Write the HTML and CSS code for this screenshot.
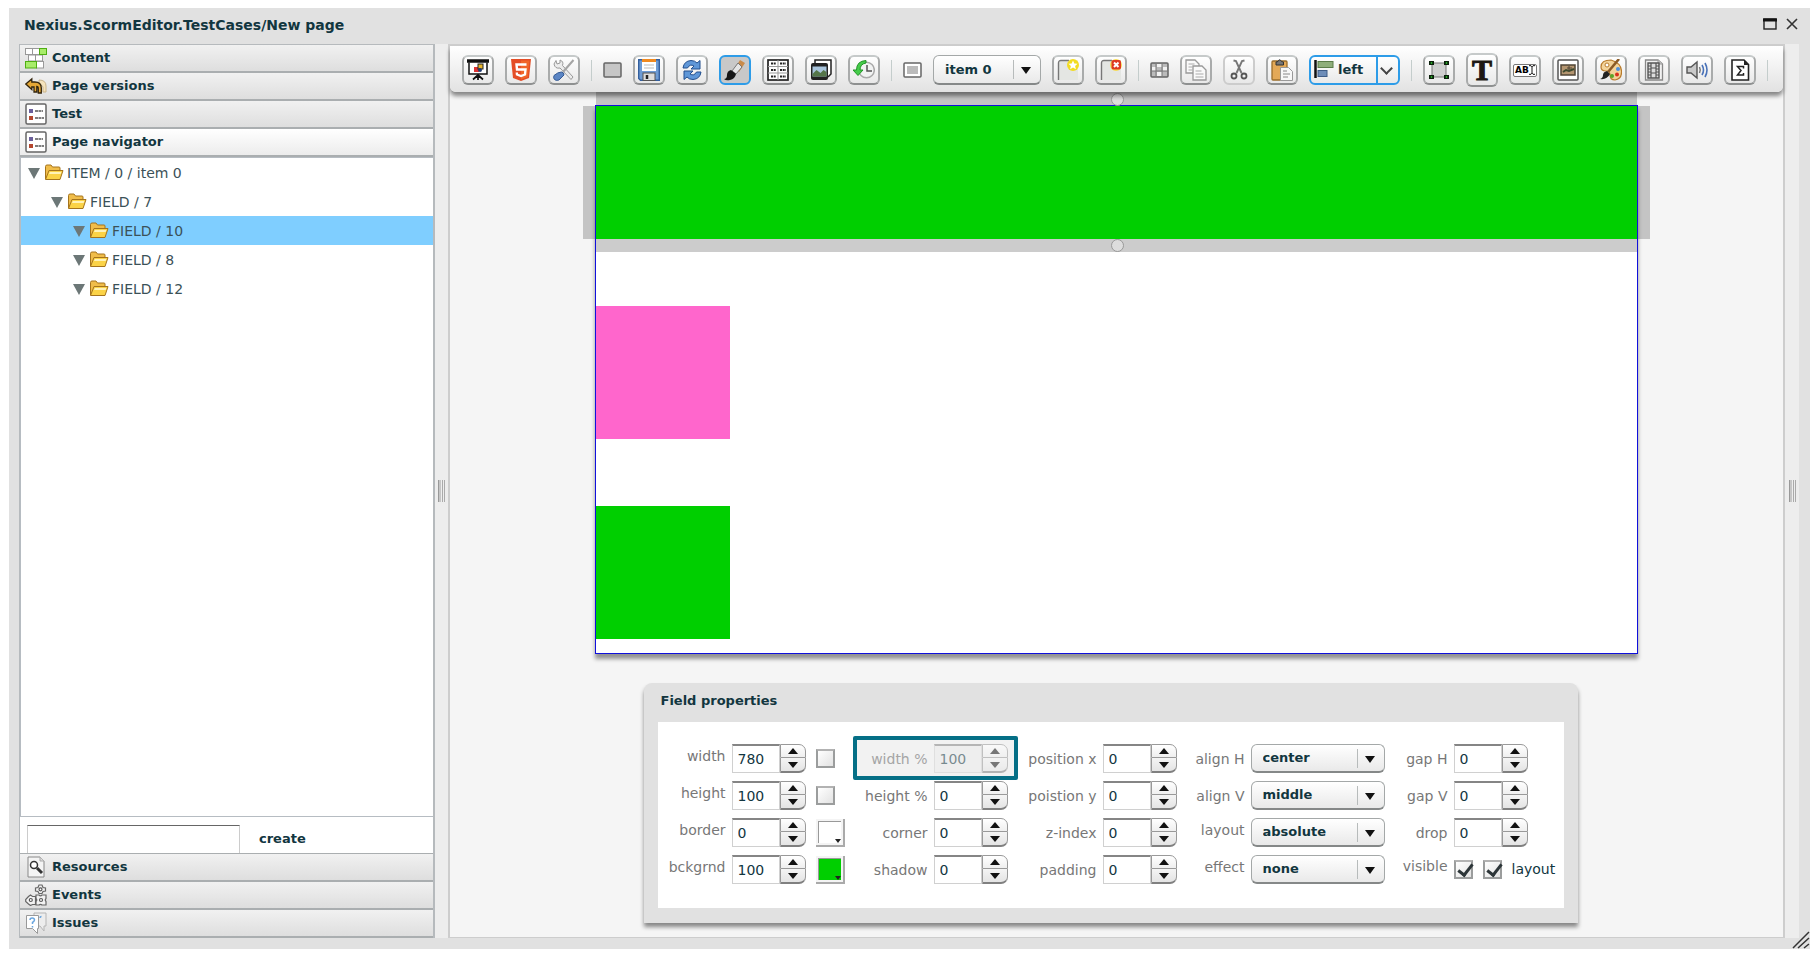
FILE: index.html
```html
<!DOCTYPE html>
<html lang="en">
<head>
<meta charset="utf-8">
<title>Nexius.ScormEditor.TestCases/New page</title>
<link rel="stylesheet" href="styles.css">
</head>
<body>
<svg class="defs" aria-hidden="true">
  <symbol id="folder" viewBox="0 0 20 17">
    <path d="M1.500 15V2.500q0-1.500 1.500-1.500h4l1.500 2H15q1 0 1 1v3" fill="#f0bd4a" stroke="#a5741c"/>
    <path d="M1.500 15.500 5 6.500h14L16 15.500z" fill="#fbd347" stroke="#a5741c"/>
    <path d="M5.800 8h11.500l-.6 2H5z" fill="#fff3b8"/>
  </symbol>
  <symbol id="list" viewBox="0 0 22 22">
    <rect x="1" y="1" width="20" height="20" rx="1.500" fill="#fff" stroke="#666" stroke-width="1.500"/>
    <rect x="4" y="6" width="4" height="4" fill="#6b5f9b"/><rect x="4" y="13" width="4" height="4" fill="#b5472f"/>
    <path d="M10 8h8M10 15h9" stroke="#555" stroke-width="1.500" stroke-dasharray="3 .5"/>
  </symbol>
</svg>

<main class="window">
  <header class="titlebar">
    <h1 class="titlebar-text">Nexius.ScormEditor.TestCases/New page</h1>
    <button class="win-btn" aria-label="Maximize"><svg width="14" height="12" viewBox="0 0 14 12"><rect x="1" y="1" width="12" height="10" fill="none" stroke="#222" stroke-width="1.400"/><path d="M0 2h14" stroke="#111" stroke-width="3"/></svg></button>
    <button class="win-btn" aria-label="Close"><svg width="12" height="12" viewBox="0 0 12 12"><path d="M1 1l10 10M11 1 1 11" stroke="#333" stroke-width="1.600"/></svg></button>
  </header>

  <div class="workspace">
    <aside class="sidebar">
      <button class="section"><svg class="section-icon" viewBox="0 0 22 22"><g fill="#fff" stroke="#999"><rect x=".5" y="1.500" width="7" height="6"/><rect x="7.500" y="1.500" width="7" height="6"/><rect x="3.500" y="8" width="7" height="6"/><rect x="10.500" y="8" width="7" height="6"/><rect x="11.500" y="14.500" width="7" height="6.500"/></g><g fill="#a8ec6a" stroke="#4fae12"><rect x="14.500" y="1.500" width="7" height="6"/><rect x=".5" y="14.500" width="11" height="6.500"/></g></svg>Content</button>
      <button class="section"><svg class="section-icon" viewBox="0 0 22 22"><path d="M14 5q7 0 7 6v6h-3v-5q0-2-4-2z" fill="#f5e3bc" stroke="#c9b48a"/><path d="M.8 9l6-5v3h3q6.500 0 6.500 6v5h-3v-4q0-2.500-1.500-2.500V17H9v-5H6.800v2.500z" fill="#e5a736" stroke="#33250c" stroke-width="1.300"/></svg>Page versions</button>
      <button class="section"><svg class="section-icon"><use href="#list"/></svg>Test</button>
      <button class="section section--open"><svg class="section-icon"><use href="#list"/></svg>Page navigator</button>

      <ul class="tree">
        <li class="node"><span class="twisty"></span><svg class="folder"><use href="#folder"/></svg>ITEM / 0 / item 0</li>
        <li class="node node--l1"><span class="twisty"></span><svg class="folder"><use href="#folder"/></svg>FIELD / 7</li>
        <li class="node node--l2 node--selected"><span class="twisty"></span><svg class="folder"><use href="#folder"/></svg>FIELD / 10</li>
        <li class="node node--l2"><span class="twisty"></span><svg class="folder"><use href="#folder"/></svg>FIELD / 8</li>
        <li class="node node--l2"><span class="twisty"></span><svg class="folder"><use href="#folder"/></svg>FIELD / 12</li>
      </ul>
      <form class="create">
        <input class="create-input" type="text" aria-label="New item name">
        <button class="create-btn" type="button">create</button>
      </form>

      <button class="section"><svg class="section-icon" viewBox="0 0 22 22"><path d="M3 1h12l4 4v16H3z" fill="#f4f4f4" stroke="#888"/><path d="M15 1v4h4" fill="#ddd" stroke="#aaa"/><circle cx="9" cy="9" r="3.500" fill="#fff" stroke="#333" stroke-width="1.500"/><path d="M12 12l5 5" stroke="#333" stroke-width="3"/></svg>Resources</button>
      <button class="section"><svg class="section-icon" viewBox="0 0 22 22"><g fill="#f2f2f2" stroke="#666" stroke-width="1.200"><path d="M14 9.500l-1-2-2.500-.5V4l2.500-.5 1-2.500h3l1 2.500 2.500.5v3L18 7.500l-1 2z"/><path d="M3.500 12.500l2-1.500 2 1.500h3v8h-3l-2 1-2-1.500L.7 17.500v-2z"/><path d="M11 11h3q1.500 1.500 3 0h4v3.500q-1.500 1.500 0 3V21h-4q-1.500-1.500-3 0h-3v-3.500q1.500-1.500 0-3z"/></g><g fill="#fff" stroke="#555" stroke-width="1.200"><circle cx="15.500" cy="5.300" r="1.500"/><circle cx="5.800" cy="16" r="1.500"/><circle cx="16" cy="16" r="1.500"/></g></svg>Events</button>
      <button class="section"><svg class="section-icon" viewBox="0 0 22 22"><path d="M9 1h12v13h-2v5l-4-5H9z" fill="#ededed" stroke="#b5b5b5"/><path d="M1.500 3.500h12v13h-1v5l-5-5h-6z" fill="#fff" stroke="#999"/><path d="M5 8q0-2 2.200-2T9.500 8q0 1.200-2 2.500v1.500M7.500 14v1.500M15 6q0-1.500 1.500-1.500" fill="none" stroke="#6aa5de" stroke-width="1.500"/></svg>Issues</button>
    </aside>

    <div class="splitter"><span class="grip"></span></div>

    <section class="stage">
      <div class="toolbar">
        <button class="tool" aria-label="Presentation"><svg viewBox="0 0 22 22"><path d="M2 3.500V15h18V3.500" fill="#fff" stroke="#111" stroke-width="1.500"/><path d="M0 2h22" stroke="#111" stroke-width="3.500"/><path d="M11 15v6M11 16l-5 4.500M11 16l5 4.500" stroke="#111" stroke-width="1.700"/><rect x="7" y="8" width="5" height="5" fill="#d33"/><rect x="11" y="5" width="5" height="5" fill="#e8b62c" stroke="#222"/><circle cx="13" cy="11" r="2" fill="#223a70"/></svg></button>
        <button class="tool" aria-label="HTML5"><svg viewBox="0 0 22 22"><path d="M1 0h20l-2 19-8 3-8-3z" fill="#e44d26"/><path d="M11 1.500h8.500L17.700 18 11 20.500z" fill="#f16529"/><path d="M16.500 5.500h-10l.5 5h8.500l-.5 5-4 1.500-4-1.500-.2-2" fill="none" stroke="#fff" stroke-width="2.400"/></svg></button>
        <button class="tool" aria-label="Settings"><svg viewBox="0 0 22 22"><path d="M3 1.500l1 3.500 3-1 0-3q4 1.500 2.500 5.500L20 18l-2 2.500L7 9Q2 10 1 5z" fill="#ececec" stroke="#999"/><path d="M20.500 1 10 13" stroke="#a5a5a5" stroke-width="2"/><path d="M8.500 13q2.500.5 2.500 3l-5 5q-3 1-4.500-.5T1 16.500q4-3.500 7.500-3.500z" fill="#5b85c4" stroke="#345a94"/></svg></button>
        <span class="sep"></span>
        <svg class="mark" viewBox="0 0 19 16"><rect x="1" y="1" width="17" height="14" rx="1" fill="#c6c6c6" stroke="#666" stroke-width="1.500"/></svg>
        <button class="tool" aria-label="Save"><svg viewBox="0 0 22 22"><path d="M.7.7h20.600v20.600H2.500L.7 19.500z" fill="#6d9bd4" stroke="#335f9e" stroke-width="1.400"/><rect x="4" y="1" width="14" height="11" fill="#fff"/><path d="M4 1.500h14" stroke="#f08a20" stroke-width="3"/><path d="M6 6h10M6 9h10" stroke="#bbb"/><rect x="5" y="14" width="12" height="7.500" fill="#ddd" stroke="#555"/><path d="M9 16v4" stroke="#222" stroke-width="2.500"/></svg></button>
        <button class="tool" aria-label="Refresh"><svg viewBox="0 0 22 22"><g fill="#5f97d8" stroke="#234f8e"><path d="M2 9Q3 2 10 1.500q4 0 6 2.500l3-2.500V10h-9l3-3Q9 4.500 6.500 9z"/><path d="M20 13q-1 7-8 7.500-4 0-6-2.500l-3 2.500V12h9l-3 3q4 2.500 6.500-2z"/></g></svg></button>
        <button class="tool tool--active" aria-label="Paint brush"><svg viewBox="0 0 22 22"><path d="M16 1l5 3-6 9-4-4z" fill="#c98b4a"/><path d="M14 4l4 4-6 7-4-3z" fill="#e5e5e5" stroke="#777"/><path d="M7 11l5 4q-1 5-6 6-4 1-6-1 3 0 3-4t4-5z" fill="#161616"/></svg></button>
        <button class="tool" aria-label="Table"><svg viewBox="0 0 22 22"><rect x="1" y="1" width="20" height="20" fill="#fff" stroke="#222" stroke-width="1.700"/><path d="M11 1v20M1 7.500h20M1 14h20" stroke="#999"/><path d="M4 4.500h5M13 4.500h6M4 11h5M13 11h6M4 17.500h5M13 17.500h6" stroke="#222" stroke-width="2" stroke-dasharray="2 .7"/></svg></button>
        <button class="tool" aria-label="Images"><svg viewBox="0 0 22 22"><path d="M5 4V1h16v14l-3 3" fill="#fff" stroke="#222" stroke-width="1.500"/><rect x="1" y="4" width="17" height="17" rx="2" fill="#222"/><rect x="2.500" y="7.500" width="14" height="10" fill="#a9c5dd"/><path d="M2.500 15l4-4 4 3 3-3 3 2v4.500h-14z" fill="#55764a"/></svg></button>
        <button class="tool" aria-label="History"><svg viewBox="0 0 22 22"><circle cx="13.500" cy="11" r="7.800" fill="#f2f3f3" stroke="#aaa" stroke-width="1.500"/><path d="M14 6v6h5" fill="none" stroke="#555" stroke-width="1.500"/><path d="M13 1.500Q3.500 2 3.500 11H0l5 5.500 5-5.500H7Q7 5 13 4z" fill="#45cc4a" stroke="#239528"/></svg></button>
        <span class="sep"></span>
        <svg class="mark" viewBox="0 0 19 16"><rect x="1" y="1" width="17" height="14" rx="1" fill="#fff" stroke="#666" stroke-width="1.500"/><rect x="4" y="4" width="11" height="8" fill="#bbb"/></svg>
        <span class="picker picker--item"><select aria-label="Item"><option>item 0</option></select></span>
        <button class="tool" aria-label="New item"><svg viewBox="0 0 22 22"><path d="M1.500 21V4q0-2.500 2.500-2.500h17V21z" fill="#e4e6e3"/><path d="M1.500 21V4q0-2.500 2.500-2.500h8" fill="none" stroke="#777" stroke-width="1.400"/><circle cx="16" cy="6" r="6" fill="#f2dc22"/><path d="M16 1.500l1.300 3 3.200.3-2.400 2.200.8 3.200-2.900-1.700-2.900 1.700.8-3.200-2.400-2.200 3.200-.3z" fill="#fff"/></svg></button>
        <button class="tool" aria-label="Delete item"><svg viewBox="0 0 22 22"><path d="M1.500 21V4q0-2.500 2.500-2.500h17V21z" fill="#e4e6e3"/><path d="M1.500 21V4q0-2.500 2.500-2.500h8" fill="none" stroke="#777" stroke-width="1.400"/><circle cx="16" cy="6" r="6" fill="#f6dc54"/><rect x="11.500" y="1" width="9.500" height="9.500" rx="2" fill="#de3a22"/><path d="M14 3.500l4.500 4.500M18.500 3.500 14 8" stroke="#fff" stroke-width="2"/></svg></button>
        <span class="sep"></span>
        <svg class="mark" viewBox="0 0 19 16"><rect x="1" y="1" width="17" height="14" rx="1" fill="#bbb" stroke="#666" stroke-width="1.500"/><path d="M2 5h4v4H2zM13 5h4v4h-4zM7 2h5v3H7zM7 10h5v4H7z" fill="#f2f2f2"/><path d="M6 2v12M12 2v12M2 9h15" stroke="#777"/></svg>
        <button class="tool" aria-label="Copy"><svg viewBox="0 0 22 22"><g fill="#fafafa" stroke="#999" stroke-width="1.300"><path d="M1 1h9l4 4v9H1z"/><path d="M8 7h9l4 4v10H8z"/></g><path d="M3.500 5h6M3.500 8h4M3.500 11h4M10.500 12h6M10.500 15h8M10.500 18h8" stroke="#aaa"/></svg></button>
        <button class="tool tool--faded" aria-label="Cut"><svg viewBox="0 0 22 22"><path d="M5.500 1.500 8 2l5.500 12M16.500 1.500 14 2 8.500 14" fill="none" stroke="#777" stroke-width="1.900"/><g fill="none" stroke="#555" stroke-width="1.800"><circle cx="6" cy="17" r="2.500"/><circle cx="16" cy="17" r="2.500"/></g></svg></button>
        <button class="tool" aria-label="Paste"><svg viewBox="0 0 22 22"><rect x="1" y="2" width="15" height="19" rx="1" fill="#e3a958" stroke="#9b6d2b" stroke-width="1.300"/><path d="M5 6V3l2-.5Q8.500-1 10.500 2.500l2 .5v3z" fill="#777" stroke="#333"/><path d="M9.500 8.500h8l4 4v9h-12z" fill="#f7f7f7" stroke="#999"/><path d="M12 12h4M12 15h7M12 18h5" stroke="#888"/></svg></button>
        <span class="picker picker--align"><svg viewBox="0 0 20 18"><path d="M1.500 0v18" stroke="#111" stroke-width="2.500"/><rect x="4" y="1.500" width="15" height="6" fill="#8fae7b" stroke="#5b7c49"/><rect x="4" y="10.500" width="9" height="6" fill="#6e8db8" stroke="#3f5c86"/></svg><select aria-label="Alignment"><option>left</option></select></span>
        <span class="sep"></span>
        <button class="tool" aria-label="Field"><svg viewBox="0 0 22 22"><rect x="4" y="4" width="14" height="14" fill="#d0d0d0" stroke="#777"/><path d="M1 2h5v4H1zM16 2h5v4h-5zM1 16h5v4H1zM16 16h5v4h-5z" fill="#0a1f0a"/><g fill="#29b529"><circle cx="3.500" cy="4" r=".9"/><circle cx="18.500" cy="4" r=".9"/><circle cx="3.500" cy="18" r=".9"/><circle cx="18.500" cy="18" r=".9"/></g></svg></button>
        <button class="tool tool--tall tool--type" aria-label="Text">T</button>
        <button class="tool tool--abi" aria-label="Text input"><span class="abi"><span>AB</span><svg width="6" height="10" viewBox="0 0 6 10"><path d="M0 .7h2l1 1 1-1h2M3 1v8M0 9.300h2l1-1 1 1h2" fill="none" stroke="#111"/></svg></span></button>
        <button class="tool" aria-label="Picture"><svg viewBox="0 0 22 22"><rect x="1" y="1" width="20" height="20" rx="1" fill="#fff" stroke="#555" stroke-width="1.500"/><rect x="4" y="6" width="14" height="10" fill="#b49570" stroke="#4f4434" stroke-width="1.500"/><path d="M6 13l3-2 3 1 5-2" stroke="#3c4a2e" stroke-width="2" fill="none"/><path d="M12 7v5M10 9h5" stroke="#4f4434"/></svg></button>
        <button class="tool" aria-label="Palette"><svg viewBox="0 0 22 22"><path d="M11 1q-10 0-10 7 0 4 5 4 4 0 4 4 0 5 5 5 7-1 6.500-9T11 1z" fill="#f3d39a" stroke="#b87b2c" stroke-width="1.200"/><circle cx="7" cy="6" r="2" fill="#fff" stroke="#b87b2c"/><circle cx="17" cy="15.500" r="2" fill="#d8321d"/><circle cx="12" cy="17" r="2" fill="#5aa528"/><circle cx="18" cy="10" r="2" fill="#4d8fdd"/><path d="M19 0 8 13" stroke="#8b5a25" stroke-width="2.600"/><path d="M7 12l3 3q-3 6-10 5 3-1 3-4t4-4z" fill="#222"/></svg></button>
        <button class="tool" aria-label="Video"><svg viewBox="0 0 22 22"><path d="M2.500 1H15l4.500 4v16h-17z" fill="#f2f2f2" stroke="#888" stroke-width="1.300"/><path d="M15 1v4h4.500" fill="#ccc" stroke="#999"/><path d="M5 4h11v15H5z" fill="#ddd" stroke="#555" stroke-width="1.400"/><path d="M8 4v15M13 4v15M8 9h5M8 14h5M5 7h3M5 10h3M5 13h3M5 16h3M13 7h3M13 10h3M13 13h3M13 16h3" stroke="#555" stroke-width="1.200"/></svg></button>
        <button class="tool" aria-label="Audio"><svg viewBox="0 0 22 22"><path d="M1 8h4l6-5v16l-6-5H1z" fill="#c9c9c9" stroke="#555" stroke-width="1.400"/><path d="M13.500 8q1.500 3 0 6" fill="none" stroke="#777" stroke-width="1.500"/><path d="M16 6q3 5 0 10M19 4q4 7 0 14" fill="none" stroke="#4a72b8" stroke-width="1.600"/></svg></button>
        <button class="tool" aria-label="Formula"><svg viewBox="0 0 22 22"><path d="M3 1h12l4.500 4.500V21H3z" fill="#fff" stroke="#222" stroke-width="1.600"/><path d="M15 1v5h4.500z" fill="#222"/><path d="M14.500 9.500V7.500h-6l3.500 4-3.500 4.500h6v-2" fill="none" stroke="#222" stroke-width="1.500"/></svg></button>
        <span class="sep"></span>
      </div>

      <div class="artboard">
        <div class="field field--a"><span class="knob knob--top"></span><span class="knob knob--bottom"></span></div>
        <div class="field field--b"></div>
        <div class="field field--c"></div>
      </div>

      <form class="panel">
        <h2 class="panel-title">Field properties</h2>
        <div class="panel-body">
          <div class="group group--size">
            <div class="row"><label class="high" for="w">width</label><span class="spin"><input id="w" type="text" value="780"><button type="button" aria-label="Increase"></button><button type="button" aria-label="Decrease"></button></span><input class="tick" type="checkbox" aria-label="Lock width"></div>
            <div class="row"><label class="high" for="h">height</label><span class="spin"><input id="h" type="text" value="100"><button type="button" aria-label="Increase"></button><button type="button" aria-label="Decrease"></button></span><input class="tick" type="checkbox" aria-label="Lock height"></div>
            <div class="row"><label class="high" for="bd">border</label><span class="spin"><input id="bd" type="text" value="0"><button type="button" aria-label="Increase"></button><button type="button" aria-label="Decrease"></button></span><button class="swatch" type="button" aria-label="Border colour"></button></div>
            <div class="row"><label class="high" for="bg">bckgrnd</label><span class="spin"><input id="bg" type="text" value="100"><button type="button" aria-label="Increase"></button><button type="button" aria-label="Decrease"></button></span><button class="swatch swatch--green" type="button" aria-label="Background colour"></button></div>
          </div>
          <div class="group group--relative">
            <div class="row row--marked"><label for="wp">width %</label><span class="spin"><input id="wp" type="text" value="100" disabled><button type="button" aria-label="Increase" disabled></button><button type="button" aria-label="Decrease" disabled></button></span></div>
            <div class="row"><label for="hp">height %</label><span class="spin"><input id="hp" type="text" value="0"><button type="button" aria-label="Increase"></button><button type="button" aria-label="Decrease"></button></span></div>
            <div class="row"><label for="co">corner</label><span class="spin"><input id="co" type="text" value="0"><button type="button" aria-label="Increase"></button><button type="button" aria-label="Decrease"></button></span></div>
            <div class="row"><label for="sh">shadow</label><span class="spin"><input id="sh" type="text" value="0"><button type="button" aria-label="Increase"></button><button type="button" aria-label="Decrease"></button></span></div>
          </div>
          <div class="group group--position">
            <div class="row"><label for="px">position x</label><span class="spin"><input id="px" type="text" value="0"><button type="button" aria-label="Increase"></button><button type="button" aria-label="Decrease"></button></span></div>
            <div class="row"><label for="py">poistion y</label><span class="spin"><input id="py" type="text" value="0"><button type="button" aria-label="Increase"></button><button type="button" aria-label="Decrease"></button></span></div>
            <div class="row"><label for="zi">z-index</label><span class="spin"><input id="zi" type="text" value="0"><button type="button" aria-label="Increase"></button><button type="button" aria-label="Decrease"></button></span></div>
            <div class="row"><label for="pd">padding</label><span class="spin"><input id="pd" type="text" value="0"><button type="button" aria-label="Increase"></button><button type="button" aria-label="Decrease"></button></span></div>
          </div>
          <div class="group group--align">
            <div class="row"><label for="ah">align H</label><span class="picker"><select id="ah"><option>center</option></select></span></div>
            <div class="row"><label for="av">align V</label><span class="picker"><select id="av"><option>middle</option></select></span></div>
            <div class="row"><label class="high" for="ly">layout</label><span class="picker"><select id="ly"><option>absolute</option></select></span></div>
            <div class="row"><label class="high" for="ef">effect</label><span class="picker"><select id="ef"><option>none</option></select></span></div>
          </div>
          <div class="group group--gap">
            <div class="row"><label for="gh">gap H</label><span class="spin"><input id="gh" type="text" value="0"><button type="button" aria-label="Increase"></button><button type="button" aria-label="Decrease"></button></span></div>
            <div class="row"><label for="gv">gap V</label><span class="spin"><input id="gv" type="text" value="0"><button type="button" aria-label="Increase"></button><button type="button" aria-label="Decrease"></button></span></div>
            <div class="row"><label for="dr">drop</label><span class="spin"><input id="dr" type="text" value="0"><button type="button" aria-label="Increase"></button><button type="button" aria-label="Decrease"></button></span></div>
            <div class="row"><label class="high" for="vi">visible</label><span class="ticks"><input class="tick" id="vi" type="checkbox" checked><input class="tick" id="inlay" type="checkbox" checked><label class="dark" for="inlay">layout</label></span></div>
          </div>
        </div>
      </form>
    </section>

    <div class="splitter splitter--right"><span class="grip"></span></div>
  </div>
  <svg class="resize" viewBox="0 0 18 18"><path d="M1 17 17 1M6 17 17 7M12 17l5-4" stroke="#333" stroke-width="1.500"/></svg>
</main>
</body>
</html>
```
FILE: styles.css
```css
* { box-sizing: border-box; }

body {
  margin: 0;
  height: 100vh;
  padding: 8px 8px 8px 9px;
  background: #fff;
  color: #12363f;
  font: 14px/16px "DejaVu Sans", Verdana, sans-serif;
}

button, input, select {
  margin: 0;
  padding: 0;
  border: 0;
  border-radius: 0;
  background: none;
  color: inherit;
  font: inherit;
}

.defs { position: absolute; width: 0; height: 0; }

.window {
  position: relative;
  display: flex;
  flex-direction: column;
  height: 100%;
  padding: 0 11px 11px 10px;
  background: #e1e1e1;
}

.titlebar {
  display: flex;
  align-items: center;
  gap: 9px;
  height: 36px;
  flex: none;
  padding: 0 1px 4px 5px;
}
.titlebar-text { margin: 0 auto 0 0; font-size: 14px; padding-top: 2px; }
.win-btn { display: flex; }

.workspace { display: flex; flex: 1; min-height: 0; background: #ededed; }

/* Left accordion */
.sidebar {
  display: flex;
  flex-direction: column;
  width: 416px;
  flex: none;
  background: #fff;
  border: solid #b6babd;
  border-width: 1px 2px 0 1px;
}
.section {
  display: flex;
  align-items: center;
  gap: 5px;
  height: 28px;
  flex: none;
  padding: 0 5px;
  border-bottom: 2px solid #aaaeb0;
  background: linear-gradient(#f1f1f1, #dedede);
  font-size: 13px;
  font-weight: bold;
}
.section--open { background: linear-gradient(#fff, #ececec); }
.section-icon { width: 22px; height: 22px; flex: none; }

.tree {
  flex: 1;
  min-height: 0;
  margin: 0;
  padding: 0;
  list-style: none;
  border: solid #b6bcc2;
  border-width: 1px 0 1px 1px;
}
.node { display: flex; align-items: center; height: 29px; padding-left: 7px; color: #3b5157; }
.node--l1 { padding-left: 30px; }
.node--l2 { padding-left: 52px; }
.node--selected { background: #7fceff; }
.twisty { border: solid transparent; border-width: 11px 6px 0; border-top-color: #6c7777; margin: 2px 4px 0 0; }
.folder { width: 20px; height: 17px; margin-right: 3px; }

.create { display: flex; align-items: stretch; gap: 19px; height: 37px; padding: 8px 0 0 7px; border-bottom: 1px solid #aaaeb0; }
.create-input { width: 213px; border: 1px solid #ccc; border-top: 1px solid #666; border-bottom: 0; padding: 0 6px; background: #fff; }
.create-btn { font-size: 13px; font-weight: bold; }

.splitter { display: flex; align-items: center; justify-content: center; width: 13px; flex: none; }
.splitter--right { width: 14px; }
.grip { width: 7px; height: 22px; background: linear-gradient(90deg, #999 1px, #c6c6c6 1px 3px, #eee 3px 4px, #aaa 4px 5px, #eee 5px 6px, #aaa 6px); }

/* Stage */
.stage {
  display: flex;
  flex-direction: column;
  flex: 1;
  min-width: 0;
  padding-bottom: 14px;
  background: #f5f5f5;
  border: 2px solid #cdcdcd;
  border-bottom-width: 1px;
}
.toolbar {
  position: relative;
  z-index: 2;
  display: flex;
  align-items: center;
  gap: 11px;
  height: 46px;
  flex: none;
  padding: 2px 12px 0;
  background: linear-gradient(#fff, #e2e2e2);
  border-radius: 0 0 6px 6px;
  box-shadow: 0 4px 4px rgba(0, 0, 0, .45);
}
.sep { width: 1px; height: 21px; flex: none; background: #c4cdcc; }
.mark { width: 19px; height: 16px; flex: none; }
.tool {
  display: flex;
  align-items: center;
  justify-content: center;
  width: 32px;
  height: 30px;
  flex: none;
  border: 2px solid #a9abab;
  border-top-color: #c6caca;
  border-bottom-color: #8e9090;
  border-radius: 6px;
  background: linear-gradient(#fff, #e8e8e8);
}
.tool svg { width: 22px; height: 22px; }
.tool--active { border-color: #2d9ce8; background: #c8c8c8; }
.tool--faded { border-color: #ccc; }
.tool--tall { height: 34px; }
.tool--type { color: #1b1712; font: bold 30px/30px "Liberation Serif", serif; -webkit-text-stroke: 1px #1b1712; }
.abi { display: flex; align-items: center; height: 13px; padding: 0 1px; border: 1px solid #777; border-radius: 2px; background: #fff; color: #000; font-size: 9px; font-weight: bold; line-height: 10px; }
.abi svg { width: 6px; height: 10px; flex: none; }

.picker { position: relative; display: flex; height: 29px; }
.picker select {
  appearance: none;
  width: 100%;
  padding: 0 34px 0 11px;
  border: 1px solid #a4a8a8;
  border-bottom: 2px solid #858888;
  border-radius: 6px;
  background: linear-gradient(#fff, #e9e9e9);
  font-size: 13px;
  font-weight: bold;
}
.picker::before { content: ""; position: absolute; top: 5px; right: 27px; width: 1px; height: 19px; background: #b7bbbb; }
.picker::after { content: ""; position: absolute; top: 12px; right: 10px; border: solid transparent; border-width: 7px 5px 0; border-top-color: #111; }
.picker--item { width: 108px; height: 30px; flex: none; }
.picker--align { width: 91px; height: 30px; flex: none; }
.picker--align svg { position: absolute; top: 5px; left: 5px; width: 20px; height: 18px; }
.picker--align select { padding: 0 20px 0 27px; border: 2px solid #2d9ce8; }
.picker--align::before { top: 1px; right: 22px; width: 2px; height: 28px; background: #2d9ce8; }
.picker--align::after { top: 9px; right: 9px; width: 7px; height: 7px; border: solid #444; border-width: 0 2px 2px 0; transform: rotate(45deg); }

.artboard {
  position: relative;
  flex: 1;
  min-height: 0;
  margin: 13px 145px 29px;
  background: #fff;
  border: 1px solid #1010dc;
  box-shadow: 0 5px 4px rgba(0, 0, 0, .4);
}
.field { position: absolute; left: 0; width: 134px; height: 133px; background: #00cf00; }
.field--a { top: 0; width: 100%; }
.field--a::before { content: ""; position: absolute; inset: 0 -13px; border: solid rgba(0, 0, 0, .2); border-width: 0 12px; }
.field--a::after { content: ""; position: absolute; inset: -14px 0 -13px; border: solid rgba(0, 0, 0, .2); border-width: 13px 0; }
.field--b { top: 200px; background: #ff66cc; }
.field--c { top: 400px; }
.knob { position: absolute; z-index: 1; left: 50%; width: 13px; height: 13px; margin-left: -6px; border: 1px solid #999; border-radius: 50%; background: #ddd; }
.knob--top { top: -13px; }
.knob--bottom { bottom: -13px; }

/* Field properties */
.panel {
  align-self: center;
  flex: none;
  margin-right: 12px;
  padding: 0 14px 15px;
  background: #e1e1e1;
  border-radius: 8px 8px 0 0;
  box-shadow: 0 4px 4px rgba(0, 0, 0, .45);
}
.panel-title { margin: 0; padding: 10px 3px 13px; font-size: 13px; line-height: 16px; }
.panel-body { display: flex; gap: 16px; padding: 22px 7px 25px 0; background: #fff; }
.group { display: grid; gap: 9px; }
.group--size { --label: 68px; --control: 74px; }
.group--relative { --label: 70px; --control: 74px; }
.group--position { --label: 73px; --control: 74px; }
.group--align { --label: 52px; --control: 134px; }
.group--gap { --label: 47px; --control: 103px; }
.row { position: relative; display: grid; grid-template-columns: var(--label) var(--control); align-items: center; column-gap: 6px; height: 28px; }
.group--size .row { grid-template-columns: var(--label) var(--control) 30px; }
.row > label { display: flex; justify-content: flex-end; white-space: nowrap; color: #777; }
.row > .high { padding-bottom: 6px; }

.spin { display: grid; grid-template: 14px 15px / 48px 26px; width: 74px; }
.spin input { grid-row: 1 / 3; width: 48px; padding: 0 5px; border: 1px solid #d0d0d0; border-top: 2px solid #858585; background: #fff; }
.spin button { display: flex; align-items: center; justify-content: center; border: 1px solid #999; border-radius: 0 7px 0 0; background: linear-gradient(#fff, #efefef); }
.spin button::before { content: ""; border: solid transparent; border-width: 0 5px 6px; border-bottom-color: #111; }
.spin button:last-child { border-top: 0; border-bottom: 2px solid #808080; border-radius: 0 0 7px 0; background: linear-gradient(#f4f4f4, #e4e4e4); }
.spin button:last-child::before { border-width: 6px 5px 0; border-top-color: #111; }

.tick { appearance: none; width: 19px; height: 19px; margin-left: 4px; border: 2px solid #9b9d9d; border-top-color: #b2b2b2; background: linear-gradient(135deg, #fff, #e2e2e2); }
.tick:checked { position: relative; }
.tick:checked::after { content: ""; position: absolute; left: 5px; top: -1px; width: 6px; height: 12px; border: solid #2c3538; border-width: 0 3px 3px 0; transform: rotate(38deg); }
.ticks { display: flex; align-items: center; gap: 10px; }
.ticks .tick { margin: 0; flex: none; }

.swatch { position: relative; width: 29px; height: 28px; margin-left: 4px; border: solid #aaa; border-width: 0 2px 2px 0; background: #f4f4f4; }
.swatch::before { content: ""; position: absolute; inset: 2px; border: solid #999; border-width: 1px 0 0 1px; background: #fff; }
.swatch::after { content: ""; position: absolute; right: 2px; bottom: 2px; border: solid transparent; border-width: 4px 3px 0; border-top-color: #222; }
.swatch--green::before { background: #00cf00; }

.row--marked::before { content: ""; position: absolute; inset: -8px -10px -8px -5px; border: 4px solid #056f86; border-radius: 2px; background: #f2f2f2; }
.row--marked > * { position: relative; }
.row--marked > label { color: #a5a5a5; }
.row--marked .spin { opacity: .55; }
.row--marked .spin input { background: #ececec; }

.resize { position: absolute; right: 0; bottom: 0; width: 18px; height: 18px; }
```
